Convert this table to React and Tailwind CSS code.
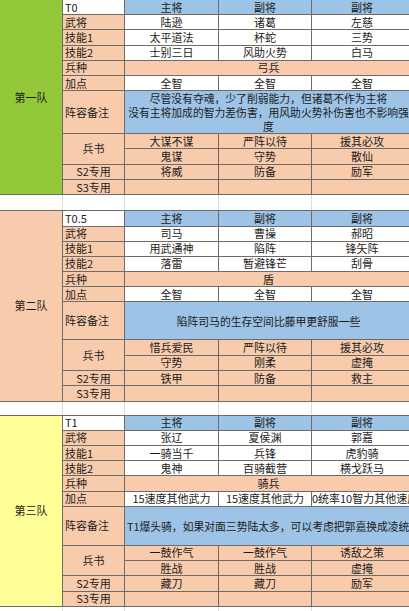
import React from "react";

const teams = [
  {
    tier: "T0",
    name: "第一队",
    groupBg: "bg-[#93c83a]",
    rows: "grid-rows-[repeat(6,14.2px)_42px_repeat(4,14.3px)]",
    generals: ["陆逊", "诸葛", "左慈"],
    skill1: ["太平道法", "杯蛇", "三势"],
    skill2: ["士别三日", "风助火势", "白马"],
    troop: "弓兵",
    points: ["全智", "全智", "全智"],
    memo: [
      "尽管没有夺魂，少了削弱能力，但诸葛不作为主将",
      "没有主将加成的智力差伤害，用风助火势补伤害也不影响强",
      "度",
    ],
    memoLeft: false,
    books1: ["大谋不谋", "严阵以待", "援其必攻"],
    books2: ["鬼谋", "守势", "散仙"],
    s2: ["将威", "防备", "励军"],
  },
  {
    tier: "T0.5",
    name: "第二队",
    groupBg: "bg-[#f8cbad]",
    rows: "grid-rows-[repeat(6,14.2px)_37px_repeat(4,14.3px)]",
    generals: ["司马", "曹操", "郝昭"],
    skill1: ["用武通神", "陷阵", "锋矢阵"],
    skill2: ["落雷", "暂避锋芒", "刮骨"],
    troop: "盾",
    points: ["全智", "全智", "全智"],
    memo: ["陷阵司马的生存空间比藤甲更舒服一些"],
    memoLeft: false,
    books1: ["惜兵爱民", "严阵以待", "援其必攻"],
    books2: ["守势", "刚柔", "虚掩"],
    s2: ["铁甲", "防备", "救主"],
  },
  {
    tier: "T1",
    name: "第三队",
    groupBg: "bg-[#ffff99]",
    rows: "grid-rows-[repeat(6,14.2px)_38px_repeat(4,14.3px)]",
    generals: ["张辽", "夏侯渊", "郭嘉"],
    skill1: ["一骑当千", "兵锋", "虎豹骑"],
    skill2: ["鬼神", "百骑截营", "横戈跃马"],
    troop: "骑兵",
    points: ["15速度其他武力", "15速度其他武力", "10统率10智力其他速度"],
    memo: ["T1爆头骑，如果对面三势陆太多，可以考虑把郭嘉换成凌统"],
    memoLeft: true,
    books1: ["一鼓作气", "一鼓作气", "诱敌之策"],
    books2: ["胜战", "胜战", "虚掩"],
    s2: ["藏刀", "藏刀", "励军"],
  },
];

// one spreadsheet cell
const Cell = ({ bg = "bg-white", left = false, className = "", children }) => (
  <div
    className={`${bg} ${
      left ? "justify-start pl-[2px]" : "justify-center"
    } flex items-center overflow-hidden whitespace-nowrap ${className}`}
  >
    {children}
  </div>
);

const ValueRow = ({ label, values, bg = "bg-white" }) => (
  <>
    <Cell bg="bg-[#f8cbad]" left>
      {label}
    </Cell>
    {values.map((v, i) => (
      <Cell key={i} bg={bg}>
        {v}
      </Cell>
    ))}
  </>
);

const TeamBlock = ({ team }) => (
  <div
    className={`grid grid-cols-[62px_61px_93px_92px_100px] ${team.rows} gap-px bg-[#6f6b68] py-px`}
  >
    <Cell bg={team.groupBg} className="row-span-11">
      {team.name}
    </Cell>

    <Cell left>{team.tier}</Cell>
    <Cell bg="bg-[#9dc3e6]">主将</Cell>
    <Cell bg="bg-[#9dc3e6]">副将</Cell>
    <Cell bg="bg-[#9dc3e6]">副将</Cell>

    <ValueRow label="武将" values={team.generals} />
    <ValueRow label="技能1" values={team.skill1} />
    <ValueRow label="技能2" values={team.skill2} />

    <Cell bg="bg-[#f8cbad]" left>
      兵种
    </Cell>
    <Cell bg="bg-[#f8cbad]" className="col-span-3">
      {team.troop}
    </Cell>

    <ValueRow label="加点" values={team.points} />

    <Cell bg="bg-[#f8cbad]" left>
      阵容备注
    </Cell>
    <div
      className={`col-span-3 flex flex-col justify-center overflow-hidden whitespace-nowrap bg-[#9dc3e6] text-[10.8px] leading-[14px] ${
        team.memoLeft ? "items-start pl-[2px]" : "items-center"
      }`}
    >
      {team.memo.map((line, i) => (
        <div key={i} className="h-[14px]">
          {line}
        </div>
      ))}
    </div>

    <Cell bg="bg-[#f8cbad]" className="row-span-2">
      兵书
    </Cell>
    {team.books1.map((v, i) => (
      <Cell key={i} bg="bg-[#f8cbad]">
        {v}
      </Cell>
    ))}
    {team.books2.map((v, i) => (
      <Cell key={i} bg="bg-[#f8cbad]">
        {v}
      </Cell>
    ))}

    <Cell bg="bg-[#f8cbad]">S2专用</Cell>
    {team.s2.map((v, i) => (
      <Cell key={i} bg="bg-[#f8cbad]">
        {v}
      </Cell>
    ))}

    <Cell bg="bg-[#f8cbad]">S3专用</Cell>
    <Cell bg="bg-[#f8cbad]" />
    <Cell bg="bg-[#f8cbad]" />
    <Cell bg="bg-[#f8cbad]" />
  </div>
);

// empty sheet row with faint gridlines
const BlankRow = ({ h = "h-[15px]" }) => (
  <div
    className={`grid grid-cols-[62px_61px_93px_92px_100px] gap-px bg-[#dcdcdc] ${h}`}
  >
    <div className="bg-white" />
    <div className="bg-white" />
    <div className="bg-white" />
    <div className="bg-white" />
    <div className="bg-white" />
  </div>
);

export default function App() {
  return (
    <div className="h-[611px] w-[409px] overflow-hidden bg-white font-['Noto_Sans_CJK_SC',sans-serif] text-[11px] leading-none text-[#1c1c1c]">
      <div className="w-[412px] -mt-px">
        <TeamBlock team={teams[0]} />
        <BlankRow h="h-[15px]" />
        <TeamBlock team={teams[1]} />
        <BlankRow h="h-[13px]" />
        <TeamBlock team={teams[2]} />
        <BlankRow h="h-[10px]" />
      </div>
    </div>
  );
}
